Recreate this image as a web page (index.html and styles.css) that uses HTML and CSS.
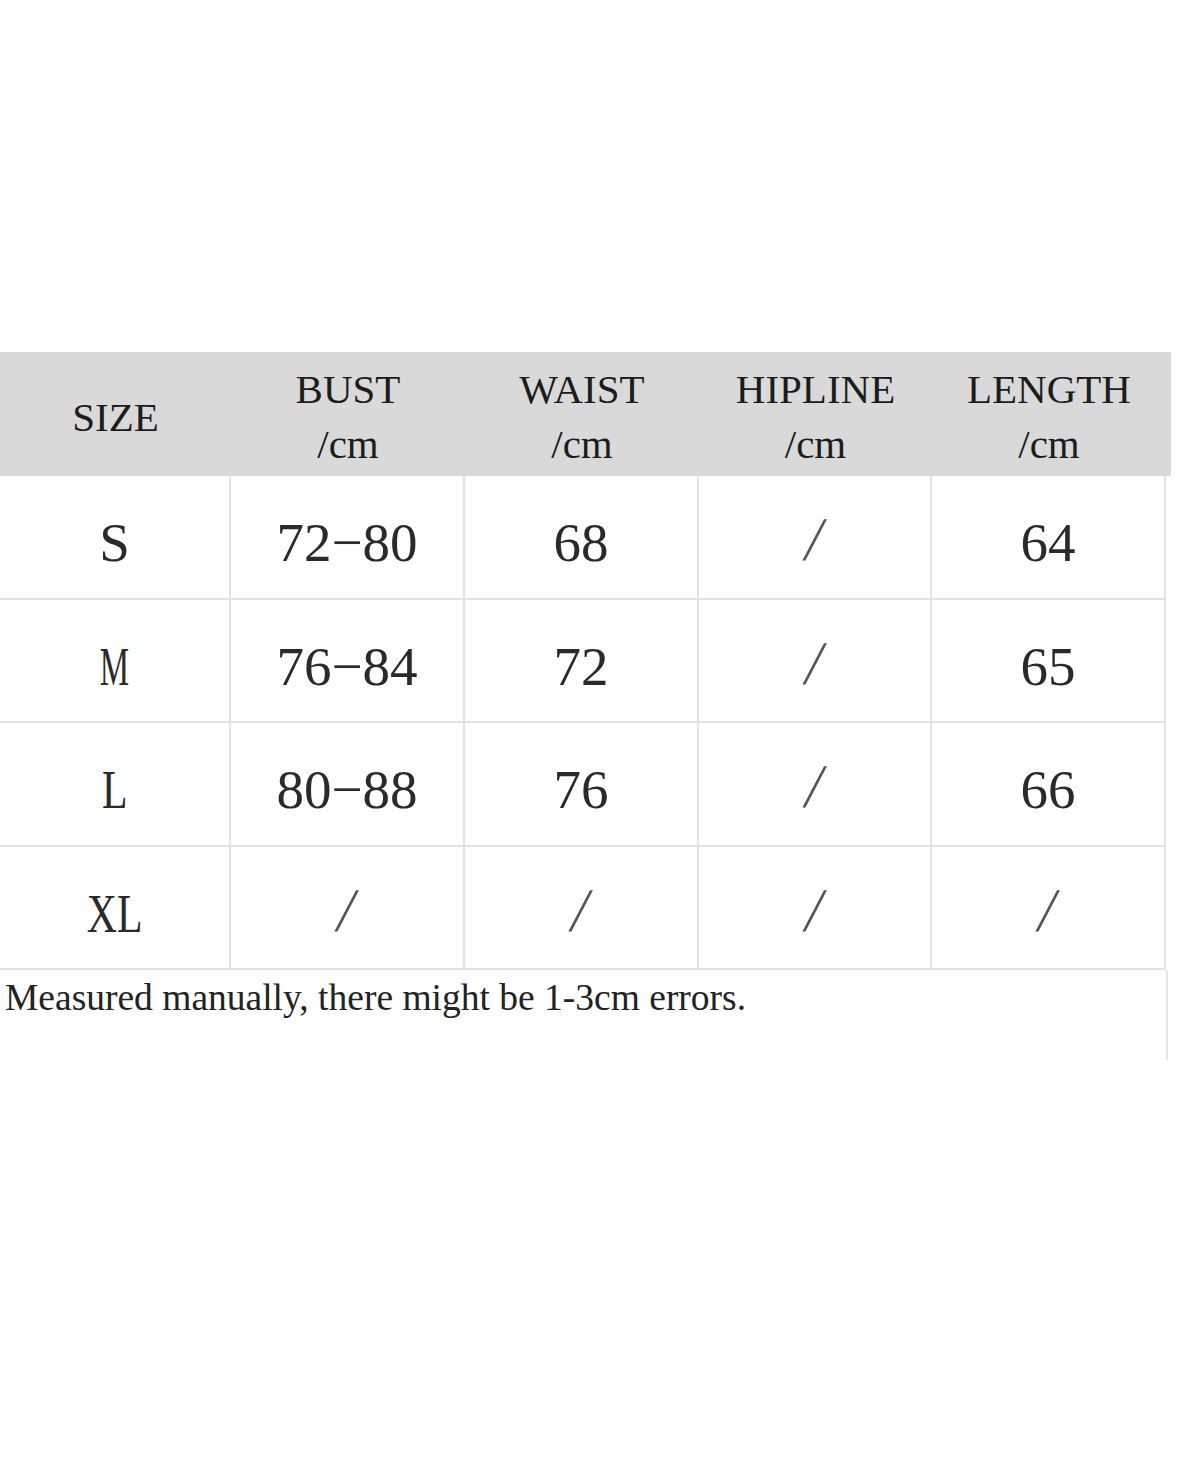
FILE: index.html
```html
<!DOCTYPE html>
<html lang="en">
<head>
<meta charset="utf-8">
<title>Size chart</title>
<link rel="stylesheet" href="styles.css">
</head>
<body>
<div class="sheet">
  <div class="head">
    <div class="hc"><span>SIZE</span></div>
    <div class="hc"><span>BUST</span><span>/cm</span></div>
    <div class="hc"><span>WAIST</span><span>/cm</span></div>
    <div class="hc"><span>HIPLINE</span><span>/cm</span></div>
    <div class="hc"><span>LENGTH</span><span>/cm</span></div>
  </div>
  <div class="body">
    <div class="cell"><span class="sz">S</span></div>
    <div class="cell">72−80</div>
    <div class="cell">68</div>
    <div class="cell"><span class="sl">/</span></div>
    <div class="cell">64</div>

    <div class="cell"><span class="sz sz-m">M</span></div>
    <div class="cell">76−84</div>
    <div class="cell">72</div>
    <div class="cell"><span class="sl">/</span></div>
    <div class="cell">65</div>

    <div class="cell"><span class="sz sz-l">L</span></div>
    <div class="cell">80−88</div>
    <div class="cell">76</div>
    <div class="cell"><span class="sl">/</span></div>
    <div class="cell">66</div>

    <div class="cell"><span class="sz sz-l">XL</span></div>
    <div class="cell"><span class="sl">/</span></div>
    <div class="cell"><span class="sl">/</span></div>
    <div class="cell"><span class="sl">/</span></div>
    <div class="cell"><span class="sl">/</span></div>
  </div>
  <div class="note">Measured manually, there might be 1-3cm errors.</div>
</div>
</body>
</html>
```

FILE: styles.css
```css
html, body {
  margin: 0;
  padding: 0;
  background: #ffffff;
}

.sheet {
  padding-top: 352px;
  font-family: "Liberation Serif", "Times New Roman", serif;
}

.head {
  display: grid;
  grid-template-columns: 231px 234px 234px 233px 234px;
  width: 1171px;
  height: 124px;
  background: #d9d9d9;
}

.hc {
  display: flex;
  flex-direction: column;
  align-items: center;
  justify-content: center;
  padding-top: 6px;
  box-sizing: border-box;
  font-size: 41px;
  line-height: 55px;
  color: #1c1c1c;
}

.body {
  display: grid;
  grid-template-columns: 231px 234px 234px 233px 234px;
  grid-template-rows: 124px 123px 124px 123px;
  width: 1166px;
}

.cell {
  display: flex;
  align-items: center;
  justify-content: center;
  box-sizing: border-box;
  padding-top: 11px;
  border-right: 2px solid #e2e2e2;
  border-bottom: 2px solid #e2e2e2;
  font-size: 55px;
  line-height: 55px;
  color: #2a2a2a;
}

.sl {
  display: inline-block;
  font-size: 62px;
  line-height: 55px;
  color: #555555;
  transform: translateY(-3px) skewX(-10deg);
}

.sz {
  display: inline-block;
}

.sz-m {
  transform: scaleX(0.6);
}

.sz-l {
  transform: scaleX(0.76);
}

.note {
  width: 1168px;
  height: 90px;
  box-sizing: border-box;
  padding: 6px 0 0 5px;
  border-right: 2px solid #e6e6e6;
  font-size: 37.5px;
  line-height: 43px;
  color: #222222;
}
```
